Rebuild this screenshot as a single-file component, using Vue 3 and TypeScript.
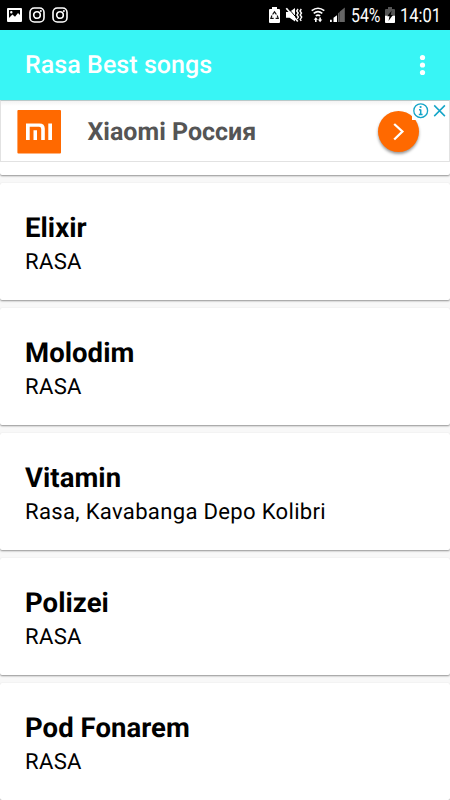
<script setup lang="ts">
interface Song {
  title: string
  artist: string
}

const songs: Song[] = [
  { title: 'Elixir', artist: 'RASA' },
  { title: 'Molodim', artist: 'RASA' },
  { title: 'Vitamin', artist: 'Rasa, Kavabanga Depo Kolibri' },
  { title: 'Polizei', artist: 'RASA' },
  { title: 'Pod Fonarem', artist: 'RASA' },
]
</script>

<template>
  <div class="screen">
    <header class="status">
      <div class="status-left">
        <svg width="15" height="14" viewBox="0 0 15 14">
          <path fill="#fff" fill-rule="evenodd" d="M1 0h13q1 0 1 1v12q0 1-1 1H1q-1 0-1-1V1q0-1 1-1zM2 2v8l3.4-3.5 2.6 2.3L11 5l2 2V2zM4.3 3a1.2 1.2 0 1 1 0 2.4 1.2 1.2 0 0 1 0-2.4z" />
        </svg>
        <svg v-for="n in 2" :key="n" width="16" height="16" viewBox="0 0 16 16" fill="none" stroke="#fff">
          <rect x="1" y="1" width="14" height="14" rx="4.3" stroke-width="1.6" />
          <circle cx="8" cy="8" r="3.3" stroke-width="1.6" />
          <circle cx="11.9" cy="4.1" r="1" fill="#fff" stroke="none" />
        </svg>
      </div>
      <div class="status-right">
        <svg class="recycle" width="11" height="16" viewBox="0 0 11 16">
          <path d="M3 0h5v2h2q1 0 1 1v12q0 1-1 1H1q-1 0-1-1V3q0-1 1-1h2z" fill="#fff" />
          <path d="M3.6 7.5 5.5 4.8l1.9 2.7M8.2 8.5l1 2.8H6.6M4.7 11.3H1.9l1-2.8" fill="none" stroke="#111" stroke-width="1.2" />
        </svg>
        <svg class="mute" width="17" height="16" viewBox="0 0 17 16">
          <path d="M0 5h3.6L9 1v13.5L3.6 10.8H0z" fill="#fff" />
          <path d="M1.6.6 12.8 13.4" stroke="#000" stroke-width="1" />
          <path d="M.3 1.2 11.8 14.5" stroke="#fff" stroke-width="1.7" />
          <path d="m12 2-1.3 2 1.5 2-1.3 2 1.5 2-1.2 2M15.3 2 14 4l1.5 2L14.2 8l1.5 2-1.5 2.4 1 1.6" fill="none" stroke="#fff" stroke-width="1.4" />
        </svg>
        <svg class="wifi" width="14" height="16" viewBox="0 0 14 16">
          <path d="M.7 3.7q6.3-5 12.6 0M2.7 6.4q4.3-3.5 8.6 0M4.8 8.9q2.2-1.6 4.4 0" fill="none" stroke="#fff" stroke-width="1.6" />
          <path d="M4.8 10.2 7 12.8H5.6V15H4v-2.2H2.7zM9.1 15.2 6.9 12.6h1.4v-2.2h1.6v2.2h1.4z" fill="#fff" />
        </svg>
        <svg class="signal" width="15" height="16" viewBox="0 0 15 16">
          <path d="M0 15v-2.3h1.8V15zM3.5 15v-4.2L7 8.3V15z" fill="#fff" />
          <path d="M8 15V6.5l1.6-1.7V15zM9.9 15V4.4L14.8.6V15z" fill="#666" />
        </svg>
        <svg class="percent" width="32" height="26" viewBox="0 0 32 26">
          <text x="1" y="20" textLength="29.5" lengthAdjust="spacingAndGlyphs">54%</text>
        </svg>
        <svg class="charge" width="10" height="16" viewBox="0 0 10 16">
          <path d="M3 0h4v2h2q1 0 1 1v12q0 1-1 1H1q-1 0-1-1V3q0-1 1-1h2z" fill="#555" />
          <path d="M0 8.7h10V15q0 1-1 1H1q-1 0-1-1z" fill="#fff" />
          <path d="M6.6 3.8 2.2 9.3h2.3L3.5 14l4.4-5.9H5.7z" fill="#000" />
        </svg>
        <svg class="clock" width="44" height="26" viewBox="0 0 44 26">
          <text x="1" y="20" textLength="41" lengthAdjust="spacingAndGlyphs">14:01</text>
        </svg>
      </div>
    </header>

    <div class="toolbar">
      <h1>Rasa Best songs</h1>
      <svg width="6" height="22" viewBox="0 0 6 22" fill="#fff">
        <circle cx="2.5" cy="3.5" r="2.6" />
        <circle cx="2.5" cy="11" r="2.6" />
        <circle cx="2.5" cy="18.5" r="2.6" />
      </svg>
    </div>

    <section class="ad">
      <svg class="logo" width="44" height="44" viewBox="0 0 44 44">
        <rect x="0.4" width="43.6" height="43.6" rx="1" fill="#ff6900" />
        <path d="M9 30V13.5h13.5q5.3 0 5.3 5.3V30h-3.6V19q0-2.2-2.2-2.2h-9.3V30zM16.5 30v-9.7H20V30zM31.3 30V13.5H35V30z" fill="#fff" />
      </svg>
      <span class="brand">Xiaomi Россия</span>
      <span class="go">
        <svg width="41" height="41" viewBox="0 0 41 41">
          <path d="m16.2 13 8.2 7.5-8.2 8" fill="none" stroke="#fff" stroke-width="2.3" />
        </svg>
      </span>
      <span class="choices">
        <svg width="37" height="19" viewBox="0 0 37 19" fill="none" stroke="#14a5c8">
          <circle cx="8.7" cy="9.7" r="6.9" stroke-width="1.3" />
          <path d="M8.7 8.5v5M7 8.7h1.7M6.8 13.6h3.8" stroke-width="1.5" />
          <circle cx="8.6" cy="6" r="1.1" fill="#14a5c8" stroke="none" />
          <path d="m22.2 4.4 10.7 10.7M32.9 4.4 22.2 15.1" stroke-width="1.5" />
        </svg>
      </span>
    </section>

    <main class="list">
      <div class="card card-tail"></div>
      <article v-for="song in songs" :key="song.title" class="card">
        <h2>{{ song.title }}</h2>
        <p>{{ song.artist }}</p>
      </article>
    </main>
  </div>
</template>

<style>
body {
  margin: 0;
  overflow: hidden;
}
</style>

<style scoped>
.screen {
  width: 450px;
  height: 800px;
  overflow: hidden;
  display: flex;
  flex-direction: column;
  background: #f8f8f8;
  font-family: Roboto, "Noto Sans", sans-serif;
  text-rendering: geometricPrecision;
  color: #000;
}
svg {
  display: block;
  flex: none;
  overflow: visible;
}
.status {
  flex: none;
  height: 30px;
  display: flex;
  justify-content: space-between;
  align-items: center;
  background: #000;
  box-sizing: border-box;
  padding: 0 7px;
}
.status-left,
.status-right {
  display: flex;
  align-items: center;
}
.status-left {
  gap: 7px;
}
.status text {
  font-size: 19.5px;
  fill: #fff;
}
.mute { margin-left: 6px; }
.wifi { margin-left: 8px; }
.signal { margin-left: 5px; }
.percent { margin-left: 5px; }
.charge { margin-left: 3px; }
.clock { margin-left: 4px; }
.toolbar {
  flex: none;
  height: 70px;
  display: flex;
  align-items: center;
  justify-content: space-between;
  padding: 0 24px 0 25px;
  background: #38f5f5;
}
h1 {
  margin: 2px 0 0;
  font-size: 25px;
  font-weight: 500;
  line-height: 30px;
  letter-spacing: 0.06px;
  color: #fff;
}
.ad {
  position: relative;
  flex: none;
  height: 62px;
  box-sizing: border-box;
  display: flex;
  align-items: center;
  padding: 0 30px 0 16px;
  border: 1px solid #e2e2e2;
  border-top-color: #b9c9c9;
  background: linear-gradient(#f3f3f3, #fff 5px);
}
.logo {
  margin-top: 1px;
}
.brand {
  margin: 3px 0 0 26.5px;
  flex: 1;
  font-size: 25px;
  line-height: 30px;
  font-weight: 700;
  color: #555;
}
.go {
  width: 41px;
  height: 41px;
  margin-right: 0.5px;
  border-radius: 50%;
  background: #ff6900;
  box-shadow: 0 2px 3px rgba(0, 0, 0, 0.4);
}
.choices {
  position: absolute;
  top: 0;
  right: 0;
  background: #fff;
}
.list {
  display: flex;
  flex-direction: column;
  gap: 8px;
}
.card {
  flex: none;
  height: 117px;
  box-sizing: border-box;
  padding: 29px 25px 0;
  background: #fff;
  border-radius: 2px;
  box-shadow: 0 1px 2px rgba(0, 0, 0, 0.42);
}
.card-tail {
  height: 13px;
  padding: 0;
  border-radius: 0 0 2px 2px;
}
h2 {
  margin: 0;
  font-size: 27.5px;
  font-weight: 700;
  line-height: 32px;
  letter-spacing: 0.05px;
}
p {
  margin: 5px 0 0;
  font-size: 22.1px;
  line-height: 26px;
  letter-spacing: 0.3px;
}
</style>
